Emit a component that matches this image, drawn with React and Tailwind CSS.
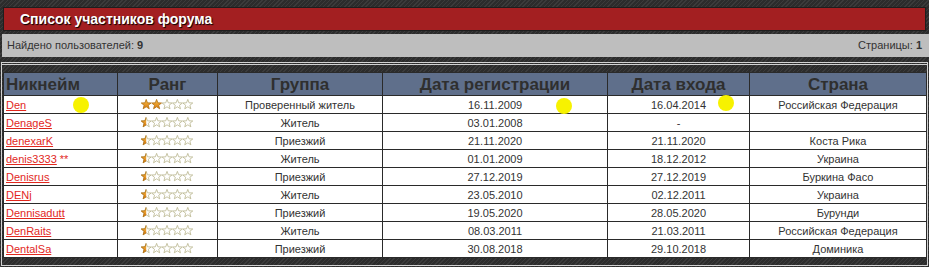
import React from 'react';

const rows = [
  { nick: 'Den', stars: 2, group: 'Проверенный житель', reg: '16.11.2009', last: '16.04.2014', country: 'Российская Федерация' },
  { nick: 'DenageS', stars: 0.5, group: 'Житель', reg: '03.01.2008', last: '-', country: '' },
  { nick: 'denexarK', stars: 0.5, group: 'Приезжий', reg: '21.11.2020', last: '21.11.2020', country: 'Коста Рика' },
  { nick: 'denis3333', mark: '**', stars: 0.5, group: 'Житель', reg: '01.01.2009', last: '18.12.2012', country: 'Украина' },
  { nick: 'Denisrus', stars: 0.5, group: 'Приезжий', reg: '27.12.2019', last: '27.12.2019', country: 'Буркина Фасо' },
  { nick: 'DENj', stars: 0.5, group: 'Житель', reg: '23.05.2010', last: '02.12.2011', country: 'Украина' },
  { nick: 'Dennisadutt', stars: 0.5, group: 'Приезжий', reg: '19.05.2020', last: '28.05.2020', country: 'Бурунди' },
  { nick: 'DenRaits', stars: 0.5, group: 'Житель', reg: '08.03.2011', last: '21.03.2011', country: 'Российская Федерация' },
  { nick: 'DentalSa', stars: 0.5, group: 'Приезжий', reg: '30.08.2018', last: '29.10.2018', country: 'Доминика' },
];

const STAR = 'M5.2 0.4 L6.49 3.82 L10.15 3.99 L7.29 6.28 L8.26 9.81 L5.2 7.8 L2.14 9.81 L3.11 6.28 L0.25 3.99 L3.91 3.82 Z';

function Stars({ value, id }) {
  return (
    <svg width="53" height="11" viewBox="0 0 53 11" className="inline-block align-middle">
      <defs>
        <linearGradient id={`g${id}`} x1="0" y1="0" x2="0" y2="1">
          <stop offset="0" stopColor="#f7c04a" />
          <stop offset="1" stopColor="#d9780c" />
        </linearGradient>
        <clipPath id={`h${id}`}>
          <rect x="0" y="0" width="5.2" height="11" />
        </clipPath>
      </defs>
      {[0, 1, 2, 3, 4].map((i) => {
        const full = value >= i + 1;
        const half = !full && value > i;
        return (
          <g key={i} transform={`translate(${i * 10.4} 0)`}>
            <path d={STAR} fill={full ? `url(#g${id})` : '#fff'} stroke={full ? '#b06e12' : '#b9b58d'} strokeWidth="0.8" strokeLinejoin="round" />
            {half && (
              <path d={STAR} fill={`url(#g${id})`} stroke="#b06e12" strokeWidth="0.8" strokeLinejoin="round" clipPath={`url(#h${id})`} />
            )}
          </g>
        );
      })}
    </svg>
  );
}

export default function App() {
  const stripes = 'bg-[repeating-linear-gradient(135deg,#2c2c2c_0px,#2c2c2c_2px,#3b3b3b_2px,#3b3b3b_3px)]';
  return (
    <div className={`relative w-[929px] h-[267px] overflow-hidden ${stripes} font-['Liberation_Sans',Arial,sans-serif] text-[11px] text-[#333]`}>
      {/* title bar */}
      <div className="pt-[7px] px-[3px]">
        <div className="h-[24px] bg-[#a31f21] border border-[#1e1e1e] flex items-center pl-[16px]">
          <span className="text-white font-bold text-[14px] [text-shadow:1px_1px_1px_#000]">Список участников форума</span>
        </div>
      </div>

      {/* info bar */}
      <div className="mt-[3px] ml-[2px] h-[23px] bg-[#bebebe] flex items-center justify-between pl-[5px] pr-[7px]">
        <span>Найдено пользователей: <b>9</b></span>
        <span>Страницы: <b>1</b></span>
      </div>

      {/* list */}
      <div className="mt-[5px] mx-[1px] border-t-[3px] border-double border-x border-b border-[#d2d2d2] pt-[7px] pb-[7px] px-[1px]">
        <table className="w-[923px] table-fixed border-collapse border border-[#2a2a2a]">
          <colgroup>
            <col className="w-[114px]" />
            <col className="w-[100px]" />
            <col className="w-[165px]" />
            <col className="w-[225px]" />
            <col className="w-[142px]" />
            <col className="w-[177px]" />
          </colgroup>
          <thead>
            <tr className="h-[23px] bg-[#5f6f8b] text-[17px] font-bold text-[#2f2f2f]">
              <th className="border border-[#2a2a2a] p-0 text-left pl-[2px] leading-none">Никнейм</th>
              <th className="border border-[#2a2a2a] p-0 leading-none">Ранг</th>
              <th className="border border-[#2a2a2a] p-0 leading-none">Группа</th>
              <th className="border border-[#2a2a2a] p-0 leading-none">Дата регистрации</th>
              <th className="border border-[#2a2a2a] p-0 leading-none">Дата входа</th>
              <th className="border border-[#2a2a2a] p-0 leading-none">Страна</th>
            </tr>
          </thead>
          <tbody className="bg-white">
            {rows.map((r, i) => (
              <tr key={r.nick} className="h-[18px]">
                <td className="border border-[#2a2a2a] p-0 pl-[2px] pt-[1px] leading-none">
                  <span className="text-[#e2271d] underline">{r.nick}</span>
                  {r.mark && <span className="text-[#e2271d]"> {r.mark}</span>}
                </td>
                <td className="border border-[#2a2a2a] p-0 text-center leading-none">
                  <Stars value={r.stars} id={i} />
                </td>
                <td className="border border-[#2a2a2a] p-0 pt-[1px] text-center leading-none">{r.group}</td>
                <td className="border border-[#2a2a2a] p-0 pt-[1px] text-center leading-none">{r.reg}</td>
                <td className="border border-[#2a2a2a] p-0 pt-[1px] text-center leading-none">{r.last}</td>
                <td className="border border-[#2a2a2a] p-0 pt-[1px] text-center leading-none">{r.country}</td>
              </tr>
            ))}
          </tbody>
        </table>
      </div>

      {/* highlight markers */}
      <div className="absolute left-[73px] top-[97px] w-[16px] h-[16px] rounded-full bg-[#f7f200]" />
      <div className="absolute left-[556px] top-[98px] w-[16px] h-[16px] rounded-full bg-[#f7f200]" />
      <div className="absolute left-[718px] top-[95px] w-[16px] h-[16px] rounded-full bg-[#f7f200]" />
    </div>
  );
}
